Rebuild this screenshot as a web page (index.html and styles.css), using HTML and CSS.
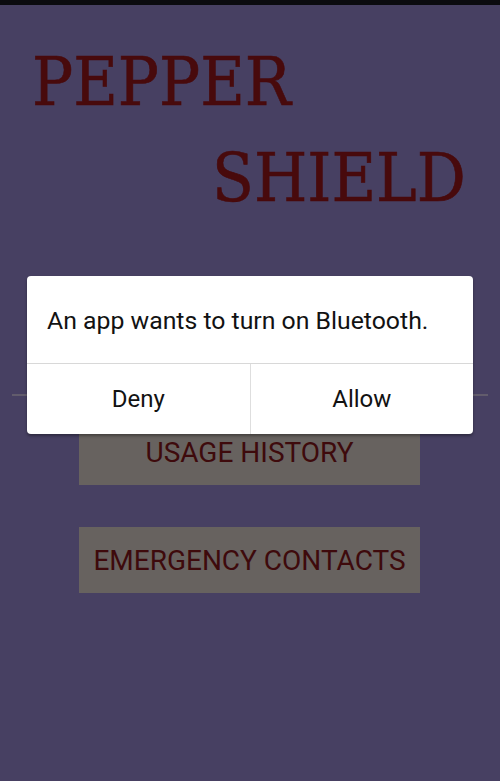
FILE: index.html
```html
<!DOCTYPE html>
<html>
<head>
<meta charset="utf-8">
<link rel="stylesheet" href="styles.css">
</head>
<body>
<div class="statusbar"></div>
<main class="screen">
  <div class="title">
    <div class="title-line first">PEPPER</div>
    <div class="title-line second">SHIELD</div>
  </div>
  <div class="divider"></div>
  <div class="actions">
    <div class="action">USAGE HISTORY</div>
    <div class="action">EMERGENCY CONTACTS</div>
  </div>
</main>
<div class="dialog">
  <div class="dialog-message">An app wants to turn on Bluetooth.</div>
  <div class="dialog-buttons">
    <div class="dialog-btn">Deny</div>
    <div class="dialog-btn">Allow</div>
  </div>
</div>
</body>
</html>
```

FILE: styles.css
```css
html, body {
  margin: 0;
  padding: 0;
}
body {
  width: 500px;
  height: 781px;
  background: #474062;
  overflow: hidden;
  position: relative;
  font-family: Roboto, "Noto Sans", sans-serif;
}
.statusbar {
  height: 5px;
  background: #0b0b0f;
}
.screen {
  display: flex;
  flex-direction: column;
}
.title {
  padding-top: 41px;
  display: flex;
  flex-direction: column;
  gap: 24px;
  font-family: "DejaVu Serif Condensed", "DejaVu Serif", serif;
  font-stretch: condensed;
  font-size: 68px;
  line-height: 72px;
  color: #480a0c;
  -webkit-text-stroke: 0.6px #480a0c;
}
.title-line.first {
  padding-left: 32px;
}
.title-line.second {
  padding-left: 212px;
}
.divider {
  margin: 180px 12px 0;
  height: 2px;
  background: #625c6c;
}
.actions {
  margin-top: 23px;
  display: flex;
  flex-direction: column;
  align-items: center;
  gap: 42px;
}
.action {
  width: 341px;
  height: 66px;
  margin-left: -1px;
  background: #67625f;
  color: #3e0a0c;
  font-size: 28px;
  display: flex;
  align-items: center;
  justify-content: center;
}
.dialog {
  position: absolute;
  left: 27px;
  top: 276px;
  width: 446px;
  height: 158px;
  background: #ffffff;
  border-radius: 4px;
  box-shadow: 0 2px 3px rgba(0,0,0,0.35);
  display: flex;
  flex-direction: column;
  color: #121212;
}
.dialog-message {
  height: 86px;
  padding-left: 20px;
  padding-top: 1px;
  font-size: 24.8px;
  display: flex;
  align-items: center;
  border-bottom: 1px solid #d8d8d8;
}
.dialog-buttons {
  flex: 1;
  display: flex;
}
.dialog-btn {
  flex: 1;
  display: flex;
  align-items: center;
  justify-content: center;
  font-size: 24px;
}
.dialog-btn + .dialog-btn {
  border-left: 1px solid #dedede;
}
```
